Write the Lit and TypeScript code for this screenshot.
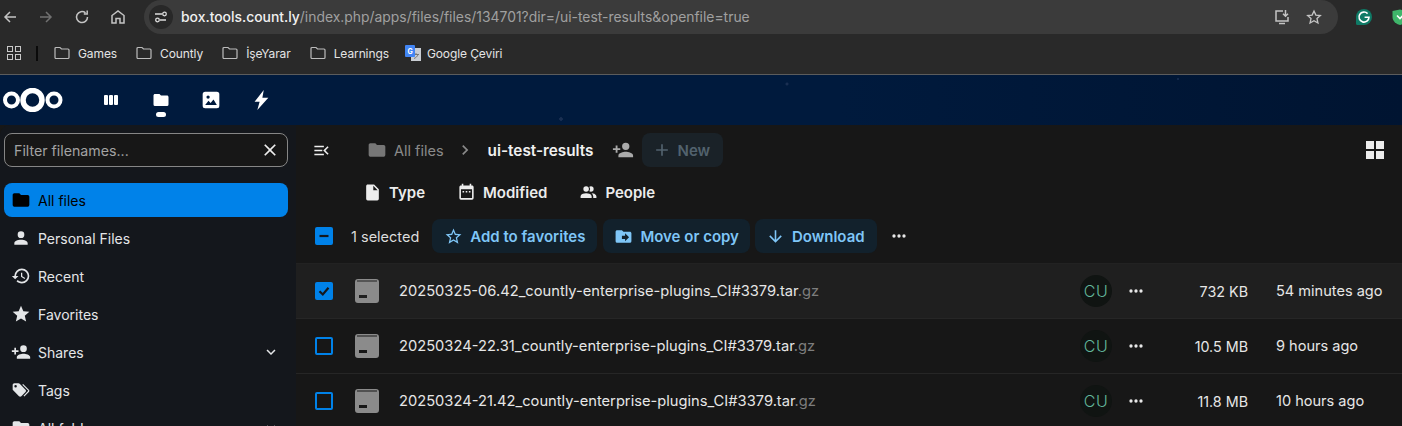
import { LitElement, html, css } from "lit";
import { customElement } from "lit/decorators.js";

const P = {
  folder: "M10,4H4C2.89,4 2,4.89 2,6V18A2,2 0 0,0 4,20H20A2,2 0 0,0 22,18V8C22,6.89 21.1,6 20,6H12L10,4Z",
  account: "M12,4A4,4 0 0,1 16,8A4,4 0 0,1 12,12A4,4 0 0,1 8,8A4,4 0 0,1 12,4M12,14C16.42,14 20,15.79 20,18V20H4V18C4,15.79 7.58,14 12,14Z",
  history: "M13.5,8H12V13L16.28,15.54L17,14.33L13.5,12.25V8M13,3A9,9 0 0,0 4,12H1L4.96,16.03L9,12H6A7,7 0 0,1 13,5A7,7 0 0,1 20,12A7,7 0 0,1 13,19C11.07,19 9.32,18.21 8.06,16.94L6.64,18.36C8.27,20 10.5,21 13,21A9,9 0 0,0 22,12A9,9 0 0,0 13,3Z",
  star: "M12,17.27L18.18,21L16.54,13.97L22,9.24L14.81,8.62L12,2L9.19,8.62L2,9.24L7.45,13.97L5.82,21L12,17.27Z",
  starOutline: "M12,15.39L8.24,17.66L9.23,13.38L5.91,10.5L10.29,10.13L12,6.09L13.71,10.13L18.09,10.5L14.77,13.38L15.76,17.66M22,9.24L14.81,8.63L12,2L9.19,8.63L2,9.24L7.45,13.97L5.82,21L12,17.27L18.18,21L16.54,13.97L22,9.24Z",
  accountPlus: "M15,14C12.33,14 7,15.33 7,18V20H23V18C23,15.33 17.67,14 15,14M6,10V7H4V10H1V12H4V15H6V12H9V10M15,12A4,4 0 0,0 19,8A4,4 0 0,0 15,4A4,4 0 0,0 11,8A4,4 0 0,0 15,12Z",
  tags: "M5.5,9A1.5,1.5 0 0,0 7,7.5A1.5,1.5 0 0,0 5.5,6A1.5,1.5 0 0,0 4,7.5A1.5,1.5 0 0,0 5.5,9M17.41,11.58C17.77,11.94 18,12.44 18,13C18,13.55 17.78,14.05 17.41,14.41L12.41,19.41C12.05,19.77 11.55,20 11,20C10.45,20 9.95,19.78 9.58,19.41L2.59,12.42C2.22,12.05 2,11.55 2,11V6C2,4.89 2.89,4 4,4H9C9.55,4 10.05,4.22 10.41,4.58L17.41,11.58M13.54,5.71L14.54,4.71L21.41,11.58C21.78,11.94 22,12.45 22,13C22,13.55 21.78,14.05 21.42,14.41L16.04,19.79L15.04,18.79L20.75,13L13.54,5.71Z",
  close: "M19,6.41L17.59,5L12,10.59L6.41,5L5,6.41L10.59,12L5,17.59L6.41,19L12,13.41L17.59,19L19,17.59L13.41,12L19,6.41Z",
  chevDown: "M7.41,8.58L12,13.17L16.59,8.58L18,10L12,16L6,10L7.41,8.58Z",
  chevRight: "M8.59,16.58L13.17,12L8.59,7.41L10,6L16,12L10,18L8.59,16.58Z",
  plus: "M19,13H13V19H11V13H5V11H11V5H13V11H19V13Z",
  file: "M13,9V3.5L18.5,9M6,2C4.89,2 4,2.89 4,4V20A2,2 0 0,0 6,22H18A2,2 0 0,0 20,20V8L14,2H6Z",
  calendar: "M19,19H5V8H19M16,1V3H8V1H6V3H5C3.89,3 3,3.89 3,5V19A2,2 0 0,0 5,21H19A2,2 0 0,0 21,19V5C21,3.89 20.1,3 19,3H18V1M7,10H9V12H7M11,10H13V12H11M15,10H17V12H15Z",
  people: "M16 17V19H2V17S2 13 9 13 16 17 16 17M12.5 7.5A3.5 3.5 0 1 0 9 11A3.5 3.5 0 0 0 12.5 7.5M15.94 13A5.32 5.32 0 0 1 18 17V19H22V17S22 13.37 15.94 13M15 4A3.39 3.39 0 0 0 13.07 4.59A5 5 0 0 1 13.07 10.41A3.39 3.39 0 0 0 15 11A3.5 3.5 0 0 0 15 4Z",
  arrowDown: "M11,4H13V16L18.5,10.5L19.92,11.92L12,19.84L4.08,11.92L5.5,10.5L11,16V4Z",
  folderMove: "M14,18V15H10V11H14V8L19,13M20,6H12L10,4H4C2.89,4 2,4.89 2,6V18A2,2 0 0,0 4,20H20A2,2 0 0,0 22,18V8C22,6.89 21.1,6 20,6Z",
  dots: "M16,12A2,2 0 0,1 18,10A2,2 0 0,1 20,12A2,2 0 0,1 18,14A2,2 0 0,1 16,12M10,12A2,2 0 0,1 12,10A2,2 0 0,1 14,12A2,2 0 0,1 12,14A2,2 0 0,1 10,12M4,12A2,2 0 0,1 6,10A2,2 0 0,1 8,12A2,2 0 0,1 6,14A2,2 0 0,1 4,12Z",
  flash: "M15,1L5,14H10.5L8,23L20,9.5H13.5Z",
  image: "M5,2H19A3,3 0 0,1 22,5V19A3,3 0 0,1 19,22H5A3,3 0 0,1 2,19V5A3,3 0 0,1 5,2M8.5,6.5A2,2 0 1,0 8.5,10.5A2,2 0 1,0 8.5,6.5M5,18H19L15,11.5L11.5,15.5L9,13Z",
  menuClose: "M3,6H15V8H3V6M3,11H13V13H3V11M3,16H15V18H3V16M21,8L17,12L21,16L19.6,17.4L14.2,12L19.6,6.6Z",
  archive: "M3,0H21A3,3 0 0,1 24,3V21A3,3 0 0,1 21,24H3A3,3 0 0,1 0,21V3A3,3 0 0,1 3,0M4,16V19H12V16ZM2,1.5V2.5H22V1.5Z",
};

const ic = (d: string, cls = "") => html`<svg class="ic ${cls}" viewBox="0 0 24 24" aria-hidden="true"><path d=${d}></path></svg>`;

const bookmarkFolder = html`<svg class="bm-folder" viewBox="0 0 16 14" aria-hidden="true"><path d="M1 2.5A1 1 0 0 1 2 1.5H6L7.5 3H14A1 1 0 0 1 15 4V11.5A1 1 0 0 1 14 12.5H2A1 1 0 0 1 1 11.5Z"></path></svg>`;

const NAV = [
  { d: P.folder, label: "All files", active: true },
  { d: P.account, label: "Personal Files" },
  { d: P.history, label: "Recent" },
  { d: P.star, label: "Favorites" },
  { d: P.accountPlus, label: "Shares", chevron: true },
  { d: P.tags, label: "Tags" },
  { d: P.folder, label: "All folders", chevron: true },
];

const FILES = [
  { stem: "20250325-06.42_countly-enterprise-plugins_CI#3379.tar", ext: ".gz", size: "732 KB", time: "54 minutes ago", selected: true },
  { stem: "20250324-22.31_countly-enterprise-plugins_CI#3379.tar", ext: ".gz", size: "10.5 MB", time: "9 hours ago", selected: false },
  { stem: "20250324-21.42_countly-enterprise-plugins_CI#3379.tar", ext: ".gz", size: "11.8 MB", time: "10 hours ago", selected: false },
];

@customElement("app-root")
export class AppRoot extends LitElement {
  static styles = css`
    :host { display: block; width: 1402px; height: 426px; overflow: hidden; background: #171717; font-family: Inter, "Liberation Sans", sans-serif; color: #e8e8e8; font-size: 14px; }
    .ic { width: 20px; height: 20px; fill: currentColor; display: block; flex: none; }

    .toolbar { height: 34px; background: #292929; display: flex; align-items: center; }
    .tool { fill: none; stroke: #c4c4c4; stroke-width: 1.5; width: 16px; height: 16px; flex: none; display: block; }
    .tool.dim { stroke: #717171; }
    .t-back { margin-left: 2px; }
    .t-fwd { margin-left: 20px; }
    .t-reload { margin-left: 20px; }
    .t-home { margin-left: 20px; }
    .pill { margin-left: 18px; width: 1194px; flex: none; height: 34px; background: #3b3b3b; border-radius: 17px; display: flex; align-items: center; padding-left: 5px; box-sizing: border-box; }
    .site { width: 24px; height: 24px; border-radius: 50%; background: #282828; display: flex; align-items: center; justify-content: center; flex: none; }
    .site svg { width: 14px; height: 14px; fill: none; stroke: #dcdcdc; stroke-width: 1.3; }
    .url { margin-left: 8px; font-size: 13.9px; color: #a0a0a0; white-space: nowrap; flex: 1; }
    .url b { font-weight: 500; color: #f0f0f0; }
    .p-install { margin-right: 16px; }
    .p-star { margin-right: 16px; width: 16px; height: 16px; }
    .gram { width: 16px; height: 16px; margin-left: 18px; flex: none; }
    .shield { width: 16px; height: 16px; margin-left: 20px; flex: none; }

    .bookmarks { box-sizing: border-box; background: #292929; border-bottom: 1px solid #5c5c5c; height: 41px; display: flex; align-items: center; padding: 0 0 2px 7px; font-size: 12px; letter-spacing: -0.1px; color: #e4e4e4; }
    .apps { width: 14px; height: 14px; display: grid; grid-template-columns: 6px 6px; grid-template-rows: 6px 6px; gap: 2px; flex: none; }
    .apps i { border: 1.3px solid #c8c8c8; box-sizing: border-box; display: block; }
    .sep { width: 2px; height: 15px; background: #0a0a0a; margin: 0 16px 0 15px; flex: none; }
    .bm { display: flex; align-items: center; gap: 8px; margin-right: 19px; white-space: nowrap; }
    .bm-folder { width: 16px; height: 14px; fill: none; stroke: #bcbcbc; stroke-width: 1.2; flex: none; }
    .gt { width: 16px; height: 16px; flex: none; margin-left: -3px; margin-right: -2px; }

    .ncbar { height: 50px; background-color: #00183a; background-image:
        radial-gradient(circle at 41px 33px, #13284b 0 1.2px, transparent 1.8px),
        radial-gradient(circle at 787px 9px, #1a2f52 0 1.2px, transparent 1.8px),
        radial-gradient(circle at 561px 44px, #1a2f52 0 1.5px, transparent 2px),
        radial-gradient(circle at 1178px 4px, #13284b 0 .8px, transparent 1.3px),
        linear-gradient(90deg, #001a3d 0%, #001a3d 60%, #001431 100%);
      display: flex; align-items: center; padding-left: 3px; }
    .logo { width: 60px; height: 24px; flex: none; }
    .appicon { color: #fff; flex: none; position: relative; display: flex; }
    .a1 { margin-left: 41px; width: 14px; height: 14px; align-items: center; }
    .a2 { margin-left: 34px; }
    .a3 { margin-left: 31px; }
    .a4 { margin-left: 29px; }
    .a2 .ic { width: 18px; height: 18px; }
    .a3 .ic { width: 20px; height: 20px; }
    .a4 .ic { width: 22px; height: 22px; }
    .bars { display: flex; gap: 1px; }
    .bars i { width: 4px; height: 10px; background: #fff; border-radius: 1px; display: block; }
    .act-dot { position: absolute; left: 4px; top: 21px; width: 10px; height: 5px; background: #fff; border-radius: 2.5px; }

    .body { display: flex; height: 301px; }
    .side { width: 296px; flex: none; background: #14171c; border-top-left-radius: 10px; padding: 8px 8px 0 4px; box-sizing: border-box; }
    .search { height: 34px; width: 284px; box-sizing: border-box; border: 1px solid #868686; border-radius: 8px; background: #171717; display: flex; align-items: center; justify-content: space-between; padding: 0 12px 0 9px; color: #a3a3a3; margin-bottom: 16px; font-size: 14.2px; }
    .search .ic { color: #eee; width: 20px; height: 20px; margin-right: -5px; }
    .nav { display: flex; flex-direction: column; gap: 4px; width: 284px; }
    .nav-item { height: 34px; border-radius: 8px; display: flex; align-items: center; padding-left: 7px; gap: 7px; color: #e4e6e8; flex: none; }
    .nav-item .ic { width: 20px; height: 20px; }
    .nav-item.active { background: #0082e9; color: #000; }
    .nav-item .chev { margin-left: auto; margin-right: 8px; width: 18px; height: 18px; }

    .main { flex: 1; min-width: 0; background: #171717; display: flex; flex-direction: column; }
    .crumbs { height: 50px; display: flex; align-items: center; padding-left: 16px; flex: none; }
    .crumbs .menu { width: 19px; height: 19px; color: #efefef; }
    .c-folder { margin-left: 36px; color: #767676; width: 20px; height: 20px; }
    .c-all { margin-left: 7px; color: #8a8a8a; font-size: 14.5px; }
    .c-chev { margin-left: 11px; color: #8a8a8a; width: 20px; height: 20px; }
    .c-cur { margin-left: 13px; font-weight: 600; color: #f0f0f0; font-size: 15.3px; }
    .c-share { margin-left: 18px; color: #aaa; width: 22px; height: 22px; }
    .new { margin-left: 8px; width: 81px; height: 34px; box-sizing: border-box; border-radius: 8px; background: #1a2228; color: #52626e; display: flex; align-items: center; padding-left: 10px; gap: 6px; font-weight: 600; font-size: 15px; }
    .new .ic { width: 20px; height: 20px; }
    .grid { margin-left: auto; margin-right: 18px; display: grid; grid-template-columns: 8px 8px; grid-template-rows: 8px 8px; gap: 2px; flex: none; }
    .grid i { background: #ececec; display: block; }

    .filters { height: 35px; flex: none; display: flex; align-items: center; padding-left: 67px; font-weight: 600; font-size: 15px; color: #ececec; }
    .filter { display: flex; align-items: center; gap: 7px; margin-right: 32px; }
    .filter .ic { width: 19px; height: 19px; }

    .selbar { height: 54px; flex: none; box-sizing: border-box; padding: 9px 0 10px 19px; display: flex; align-items: center; border-bottom: 1px solid #222; }
    .check { width: 18px; height: 18px; box-sizing: border-box; border-radius: 2px; flex: none; display: flex; align-items: center; justify-content: center; }
    .check.on { background: #0082e9; color: #14171c; }
    .check.off { border: 2px solid #0082e9; }
    .check.on svg { width: 14px; height: 14px; fill: none; stroke: #14171c; stroke-width: 2.2; }
    .count { margin-left: 18px; margin-right: 13px; color: #dcdcdc; white-space: nowrap; font-size: 14.5px; }
    .act { height: 34px; box-sizing: border-box; background: #12212c; color: #7fc6f7; font-weight: 600; font-size: 15px; border-radius: 8px; display: flex; align-items: center; padding: 0 11px; gap: 7px; margin-right: 5px; white-space: nowrap; }
    .act .ic { width: 19px; height: 19px; }
    .act.fav { padding: 0 12px; margin-right: 6px; }
    .act.down { padding: 0 12px 0 11px; margin-right: 6px; }
    .more { color: #e8e8e8; width: 20px; height: 20px; margin-left: 6px; }

    .row { height: 55px; flex: none; box-sizing: border-box; border-bottom: 1px solid #262626; display: grid; grid-template-columns: 18px 24px 723px 32px 14px 122px 126px; align-items: center; padding-left: 19px; color: #e6e6e6; font-size: 14.7px; }
    .row.sel { background: #1f1f1f; }
    .archive { width: 24px; height: 24px; fill: #8b8b8b; fill-rule: evenodd; margin-left: 22px; grid-column: 2; }
    .name { margin-left: 42px; white-space: nowrap; }
    .name span { color: #7d7d7d; }
    .avatar { width: 32px; height: 32px; border-radius: 50%; background: #101412; color: #63b79b; display: flex; align-items: center; justify-content: center; font-size: 16px; font-weight: 300; letter-spacing: 0.5px; }
    .rdots { width: 20px; height: 20px; margin-left: 14px; color: #e8e8e8; }
    .size { text-align: right; font-size: 14.3px; }
    .time { margin-left: 28px; white-space: nowrap; font-size: 14.55px; }
  `;

  render() {
    return html`
      <div class="toolbar">
        <svg class="tool t-back" viewBox="0 0 16 16"><path d="M14 8H3M8 3L3 8L8 13"></path></svg>
        <svg class="tool dim t-fwd" viewBox="0 0 16 16"><path d="M2 8H13M8 3L13 8L8 13"></path></svg>
        <svg class="tool t-reload" viewBox="0 0 16 16"><path d="M13.5 8A5.5 5.5 0 1 1 11.5 3.8M13.2 1.5V5H9.8"></path></svg>
        <svg class="tool t-home" viewBox="0 0 16 16"><path d="M2 14V6.5L8 2L14 6.5V14H10V9.5H6V14Z"></path></svg>
        <div class="pill">
          <div class="site"><svg viewBox="0 0 14 14"><path d="M1 4H8M12 10H6"></path><circle cx="10.5" cy="4" r="1.8"></circle><circle cx="3.5" cy="10" r="1.8"></circle></svg></div>
          <div class="url"><b>box.tools.count.ly</b>/index.php/apps/files/files/134701?dir=/ui-test-results&openfile=true</div>
          <svg class="tool p-install" viewBox="0 0 16 16"><path d="M9 2H2V12H14V8M5 14.5H11M11.5 1V7M9 4.8L11.5 7.2L14 4.8"></path></svg>
          <svg class="tool p-star" viewBox="0 0 24 24"><path stroke-width="2" d="M12 3L14.8 9.2L21.5 9.9L16.5 14.4L17.9 21L12 17.6L6.1 21L7.5 14.4L2.5 9.9L9.2 9.2Z"></path></svg>
        </div>
        <svg class="gram" viewBox="0 0 16 16"><path fill="#0f7a66" d="M8 0A8 8 0 0 1 16 8A8 8 0 0 1 8 16H1.5A1.5 1.5 0 0 1 0 14.5V8A8 8 0 0 1 8 0Z"></path><path fill="none" stroke="#fff" stroke-width="1.6" d="M11.6 4.6A5 5 0 1 0 13 8.2H8.6"></path></svg>
        <svg class="shield" viewBox="0 0 16 16"><path fill="#3fb56a" d="M8 0.5L15.5 2V8C15.5 12 12 15 8 16C4 15 0.5 12 0.5 8V2Z"></path><path fill="none" stroke="#fff" stroke-width="1.6" d="M5 6.5L8 9.5L11 6.5"></path></svg>
      </div>

      <div class="bookmarks">
        <div class="apps"><i></i><i></i><i></i><i></i></div>
        <div class="sep"></div>
        ${["Games", "Countly", "İşeYarar", "Learnings"].map((n) => html`<div class="bm">${bookmarkFolder}<span>${n}</span></div>`)}
        <div class="bm">
          <svg class="gt" viewBox="0 0 16 16"><rect x="6" y="3" width="10" height="13" fill="#c9cdd3"></rect><path d="M8 9.5H14M11 8V9.5M13 9.5C12.5 11.5 10.5 13 9 13.5" fill="none" stroke="#666" stroke-width="0.8"></path><rect x="0" y="0" width="10" height="12" rx="1" fill="#4285f4"></rect><text x="2.4" y="8.6" font-size="7" font-weight="700" fill="#fff" font-family="Inter, sans-serif">G</text></svg>
          <span>Google Çeviri</span>
        </div>
      </div>

      <div class="ncbar">
        <svg class="logo" viewBox="0 0 60 24" aria-hidden="true">
          <g fill="none" stroke="#fff">
            <circle cx="29.5" cy="12" r="9.5" stroke-width="5.5"></circle>
            <circle cx="8.5" cy="12" r="6.5" stroke-width="4"></circle>
            <circle cx="51" cy="12" r="6.5" stroke-width="4"></circle>
          </g>
        </svg>
        <div class="appicon a1"><div class="bars"><i></i><i></i><i></i></div></div>
        <div class="appicon a2">${ic(P.folder)}<span class="act-dot"></span></div>
        <div class="appicon a3">${ic(P.image)}</div>
        <div class="appicon a4">${ic(P.flash)}</div>
      </div>

      <div class="body">
        <aside class="side">
          <div class="search"><span>Filter filenames...</span>${ic(P.close)}</div>
          <nav class="nav">
            ${NAV.map((n) => html`<div class="nav-item ${n.active ? "active" : ""}">${ic(n.d)}<span>${n.label}</span>${n.chevron ? ic(P.chevDown, "chev") : ""}</div>`)}
          </nav>
        </aside>

        <section class="main">
          <div class="crumbs">
            ${ic(P.menuClose, "menu")}
            ${ic(P.folder, "c-folder")}
            <span class="c-all">All files</span>
            ${ic(P.chevRight, "c-chev")}
            <span class="c-cur">ui-test-results</span>
            ${ic(P.accountPlus, "c-share")}
            <div class="new">${ic(P.plus)}<span>New</span></div>
            <div class="grid"><i></i><i></i><i></i><i></i></div>
          </div>

          <div class="filters">
            <div class="filter">${ic(P.file)}<span>Type</span></div>
            <div class="filter">${ic(P.calendar)}<span>Modified</span></div>
            <div class="filter">${ic(P.people)}<span>People</span></div>
          </div>

          <div class="selbar">
            <div class="check on"><svg viewBox="0 0 14 14"><path d="M2.5 7H11.5"></path></svg></div>
            <span class="count">1 selected</span>
            <div class="act fav">${ic(P.starOutline)}<span>Add to favorites</span></div>
            <div class="act">${ic(P.folderMove)}<span>Move or copy</span></div>
            <div class="act down">${ic(P.arrowDown)}<span>Download</span></div>
            ${ic(P.dots, "more")}
          </div>

          ${FILES.map((f) => html`
            <div class="row ${f.selected ? "sel" : ""}">
              <div class="check ${f.selected ? "on" : "off"}">${f.selected ? html`<svg viewBox="0 0 14 14"><path d="M2.5 7.2L5.8 10.5L11.5 3.8"></path></svg>` : ""}</div>
              <svg class="archive" viewBox="0 0 24 24" aria-hidden="true"><path d=${P.archive}></path></svg>
              <div class="name">${f.stem}<span>${f.ext}</span></div>
              <div class="avatar">CU</div>
              ${ic(P.dots, "rdots")}
              <div class="size">${f.size}</div>
              <div class="time">${f.time}</div>
            </div>
          `)}
        </section>
      </div>
    `;
  }
}
